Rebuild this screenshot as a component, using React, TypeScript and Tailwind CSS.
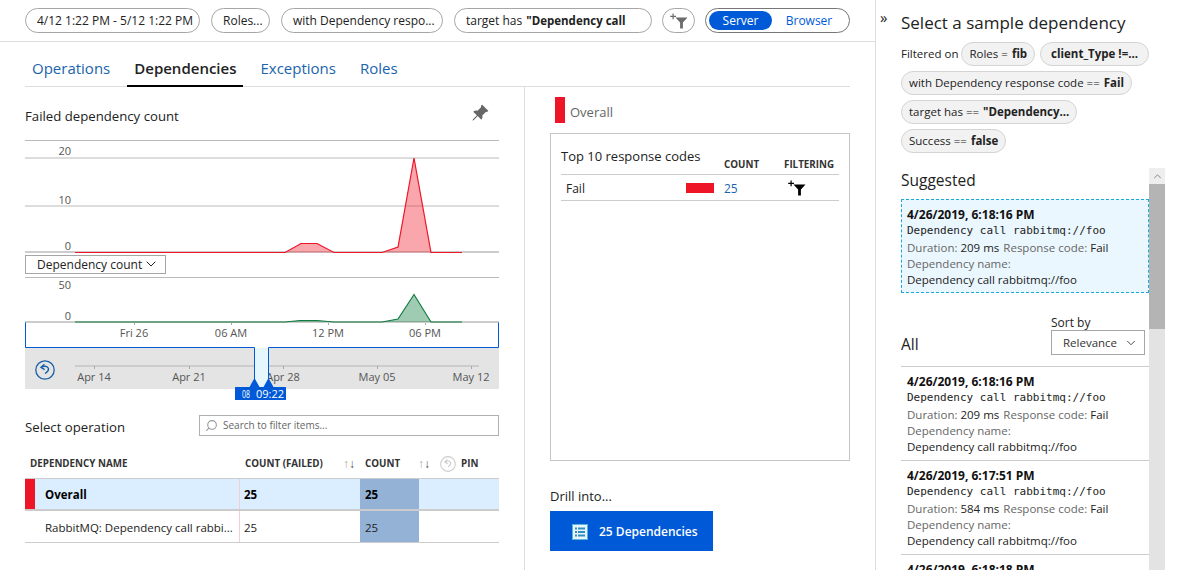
import { ChevronDown, Search } from "lucide-react";
import { BsPinAngleFill } from "react-icons/bs";

// ── small drawings ────────────────────────────────────────────────

function FunnelPlus({ color, className }: { color: string; className: string }) {
  return (
    <svg viewBox="0 0 18 16" className={className} fill={color}>
      <path d="M2.5 0.5h1.2v2.3H6V4H3.7v2.3H2.5V4H0.2V2.8h2.3z" />
      <path d="M5.5 4.6h12l-4.6 4.8v6.2h-2.8V9.4z" />
    </svg>
  );
}

function UndoCircle({ color, className }: { color: string; className: string }) {
  return (
    <svg viewBox="0 0 20 20" className={className} fill="none" stroke={color}>
      <circle cx="10" cy="10" r="9.2" strokeWidth="1.3" />
      <path d="M6.2 7.4c2-1.7 6.6-1.6 7.3 1.2.5 2.2-1.6 3.5-3.4 5" strokeWidth="1.4" />
      <path d="M9.4 4.3 6 7.3l3.6 2.4" strokeWidth="1.4" />
    </svg>
  );
}

function ListIcon() {
  return (
    <svg viewBox="0 0 16 16" className="w-4 h-4">
      <rect x="0.5" y="0.5" width="15" height="15" fill="#e8f4fb" stroke="#59b4d9" />
      <g fill="#2f8fc4">
        <rect x="3" y="3.5" width="2" height="2" />
        <rect x="6" y="3.5" width="7" height="2" />
        <rect x="3" y="7" width="2" height="2" />
        <rect x="6" y="7" width="7" height="2" />
        <rect x="3" y="10.5" width="2" height="2" />
        <rect x="6" y="10.5" width="7" height="2" />
      </g>
    </svg>
  );
}

// ── chart, drawn in page coordinates ──────────────────────────────

function ChartLabel({ x, y, children }: { x: number; y: number; children: string }) {
  return (
    <text x={x} y={y} textAnchor="middle" fontSize="11" fill="#555">
      {children}
    </text>
  );
}

function Charts() {
  return (
    <svg viewBox="25 135 474 267" className="w-[474px] h-[267px] block">
      <rect x="25" y="140" width="474" height="1" fill="#bbbbbb" />
      <rect x="25" y="157" width="474" height="2" fill="#dddddd" />
      <rect x="25" y="205" width="474" height="2" fill="#dddddd" />
      <rect x="25" y="251" width="474" height="2" fill="#cccccc" />
      <text x="71" y="155" textAnchor="end" fontSize="11" fill="#555">20</text>
      <text x="71" y="204" textAnchor="end" fontSize="11" fill="#555">10</text>
      <text x="71" y="250" textAnchor="end" fontSize="11" fill="#555">0</text>
      <path d="M285 252.5 301 243.5H317L334 252.5H382L398 247 414 158 431 252.5Z" fill="#ee1527" fillOpacity="0.38" />
      <path d="M75 252.5H285L301 243.5H317L334 252.5H382L398 247 414 158 431 252.5H462" fill="none" stroke="#ee1527" strokeWidth="1.2" />

      <rect x="25" y="277" width="474" height="1" fill="#bbbbbb" />
      <text x="71" y="289" textAnchor="end" fontSize="11" fill="#555">50</text>
      <text x="71" y="320" textAnchor="end" fontSize="11" fill="#555">0</text>
      <rect x="25" y="321" width="474" height="2" fill="#cccccc" />
      <path d="M285 322 300 320.5H317L334 322H382L398 319 414 294.5 431 322Z" fill="#107c41" fillOpacity="0.4" />
      <path d="M75 322H285L300 320.5H317L334 322H382L398 319 414 294.5 431 322H462" fill="none" stroke="#107c41" strokeWidth="1.2" />

      <path d="M134.5 323v2M231.5 323v2M328.5 323v2M425.5 323v2" stroke="#aaaaaa" />
      <ChartLabel x={134} y={337}>Fri 26</ChartLabel>
      <ChartLabel x={231} y={337}>06 AM</ChartLabel>
      <ChartLabel x={328} y={337}>12 PM</ChartLabel>
      <ChartLabel x={425} y={337}>06 PM</ChartLabel>

      <rect x="25" y="348" width="474" height="41" fill="#e4e4e4" />
      <rect x="75" y="365" width="404" height="2" fill="#cccccc" />
      <path d="M94.5 366v3M189.5 366v3M283.5 366v3M377.5 366v3M471.5 366v3" stroke="#aaaaaa" />
      <ChartLabel x={94} y={381}>Apr 14</ChartLabel>
      <ChartLabel x={189} y={381}>Apr 21</ChartLabel>
      <ChartLabel x={283} y={381}>Apr 28</ChartLabel>
      <ChartLabel x={377} y={381}>May 05</ChartLabel>
      <ChartLabel x={471} y={381}>May 12</ChartLabel>
      <svg x="35" y="360" width="20" height="20" viewBox="0 0 20 20" fill="none" stroke="#1a5fa8">
        <circle cx="10" cy="10" r="9.2" strokeWidth="1.3" />
        <path d="M6.2 7.4c2-1.7 6.6-1.6 7.3 1.2.5 2.2-1.6 3.5-3.4 5" strokeWidth="1.4" />
        <path d="M9.4 4.3 6 7.3l3.6 2.4" strokeWidth="1.4" />
      </svg>

      {/* brush selection */}
      <rect x="255" y="348" width="13" height="39" fill="#e5f6fd" />
      <path d="M25.5 322.5V347.5H254.5V387M268.5 387V347.5H498.5V322.5" fill="none" stroke="#005ad8" />
      <path d="M254.5 378 259.5 387H249.5ZM268.5 378 273.5 387H263.5Z" fill="#005ad8" />
      <rect x="235" y="387" width="51" height="13" fill="#005ad8" />
      <text x="242" y="398" fontSize="11" fill="#fff" textLength="8" lengthAdjust="spacingAndGlyphs">08</text>
      <text x="256" y="398" fontSize="11" fill="#fff">09:22</text>
    </svg>
  );
}

// ── main area pieces ──────────────────────────────────────────────

function Pill({ width, children }: { width: string; children: React.ReactNode }) {
  return (
    <div className={`${width} h-[25px] shrink-0 flex items-center px-[11px] rounded-full border border-[#a6a6a6] text-[12px] text-[#222] whitespace-nowrap overflow-hidden`}>
      {children}
    </div>
  );
}

function FilterBar() {
  return (
    <div className="h-[42px] pl-[25px] flex items-center gap-[11px] border-b border-[#dddddd]">
      <Pill width="w-[175px]">4/12 1:22 PM - 5/12 1:22 PM</Pill>
      <Pill width="w-[59px]">Roles...</Pill>
      <Pill width="w-[162px]">with Dependency respo...</Pill>
      <Pill width="w-[198px]">
        <span>target has</span>
        <b className="ml-[4px] text-[11.5px]">"Dependency call</b>
      </Pill>
      <div className="w-[33px] h-[25px] -ml-[1px] shrink-0 rounded-full border border-[#a6a6a6] flex items-center justify-center">
        <FunnelPlus color="#6b6b6b" className="w-[18px] h-4" />
      </div>
      <div className="w-[145px] h-[25px] ml-[-1px] shrink-0 rounded-full border border-[#777777] flex items-center p-[3px] text-[12px]">
        <div className="w-[63px] h-[19px] rounded-full bg-[#005ad8] text-white flex items-center justify-center">Server</div>
        <div className="flex-1 text-center text-[#005ad8]">Browser</div>
      </div>
    </div>
  );
}

function Tabs() {
  const tabs = ["Operations", "Dependencies", "Exceptions", "Roles"];
  return (
    <div className="h-[45px] ml-[25px] w-[825px] border-b border-[#dddddd] flex gap-[10px] text-[15px]">
      {tabs.map((t) => {
        const active = t === "Dependencies";
        return (
          <div
            key={t}
            className={
              active
                ? "h-[45px] px-[7px] pt-[14px] leading-[24px] border-b-2 border-black font-semibold text-[#222]"
                : "h-[45px] px-[7px] pt-[14px] leading-[24px] text-[#1a64ad]"
            }
          >
            {t}
          </div>
        );
      })}
    </div>
  );
}

function HeaderCell({ className, children }: { className: string; children: React.ReactNode }) {
  return <div className={`text-[9.8px] font-bold text-[#333] whitespace-nowrap ${className}`}>{children}</div>;
}

function SortArrows({ className }: { className: string }) {
  return (
    <div className={`text-[12px] leading-none ${className}`}>
      <span className="text-[#aaaaaa]">↑</span>
      <span className="text-[#555]">↓</span>
    </div>
  );
}

function DependencyRow({ name, selected }: { name: string; selected?: boolean }) {
  return (
    <div className={selected ? "h-[30px] flex bg-[#dbeeff] font-bold text-black" : "h-[31px] flex text-[#222]"}>
      <div className={selected ? "w-[10px] bg-[#ee1527]" : "w-[10px]"} />
      <div className="w-[205px] pl-[10px] pt-[2px] flex items-center border-r border-[#f6cdd1] whitespace-nowrap overflow-hidden">
        {name}
      </div>
      <div className="w-[120px] pl-[4px] pt-[2px] flex items-center">25</div>
      <div className="w-[59px] pl-[5px] pt-[2px] flex items-center bg-[#94b2d6]">25</div>
    </div>
  );
}

function LeftColumn() {
  return (
    <div className="w-[525px] pl-[25px] pr-[25px] border-r border-[#dddddd]">
      <div className="h-[48px] flex items-center justify-between pt-[12px]">
        <div className="text-[13.2px] text-[#222]">Failed dependency count</div>
        <BsPinAngleFill className="w-[18px] h-[18px] mr-[10px] -mt-[8px] text-[#666666]" />
      </div>
      <div className="relative">
        <Charts />
        <div className="absolute left-0 top-[120px] w-[141px] h-[19px] bg-white border border-[#a6a6a6] flex items-start justify-between pl-[11px] pr-[6px] text-[12px] text-[#222] overflow-hidden">
          <span className="leading-[14px] pt-[2px]">Dependency count</span>
          <ChevronDown className="w-4 h-4" strokeWidth={1.5} />
        </div>
      </div>
      <div className="mt-[13px] h-[21px] flex items-center justify-between">
        <div className="text-[13.2px] text-[#222] pt-[4px]">Select operation</div>
        <div className="w-[300px] h-[21px] border border-[#b0b0b0] flex items-center pl-[5px] gap-[5px] text-[10px] text-[#666]">
          <Search className="w-[13px] h-[13px] -scale-x-100 text-[#999999]" />
          Search to filter items...
        </div>
      </div>
      <div className="h-[42px] flex items-center relative pt-[14px]">
        <HeaderCell className="ml-[5px] w-[215px]">DEPENDENCY NAME</HeaderCell>
        <HeaderCell className="w-[98px]">COUNT (FAILED)</HeaderCell>
        <SortArrows className="w-[22px]" />
        <HeaderCell className="w-[53px]">COUNT</HeaderCell>
        <SortArrows className="w-[22px]" />
        <UndoCircle color="#cccccc" className="w-[16px] h-[16px] mr-[5px]" />
        <HeaderCell className="">PIN</HeaderCell>
      </div>
      <div className="text-[11.5px] border-t border-[#cccccc]">
        <DependencyRow name="Overall" selected />
        <div className="h-[2px] bg-[#cccccc]" />
        <DependencyRow name="RabbitMQ: Dependency call rabbi..." />
        <div className="h-px bg-[#cccccc]" />
      </div>
    </div>
  );
}

function RightColumn() {
  return (
    <div className="w-[326px] pl-[25px]">
      <div className="h-[46px] pt-[10px] flex items-stretch">
        <div className="w-[10px] h-[26px] ml-[5px] bg-[#ee1527]" />
        <div className="ml-[5px] text-[13px] text-[#666] leading-[30px]">Overall</div>
      </div>
      <div className="w-[300px] h-[328px] border border-[#c4c4c4] px-[10px] pt-[11px]">
        <div className="relative h-[30px] border-b border-[#cccccc]">
          <div className="text-[13px] text-[#222] leading-[22px]">Top 10 response codes</div>
          <HeaderCell className="absolute left-[163px] top-[13px] text-[9.5px]">COUNT</HeaderCell>
          <HeaderCell className="absolute left-[223px] top-[13px] text-[9.5px]">FILTERING</HeaderCell>
        </div>
        <div className="h-[26px] flex items-center border-b border-[#cccccc] text-[12px]">
          <div className="w-[125px] pl-[5px] pt-[3px] text-[#222]">Fail</div>
          <div className="w-[28px] h-[10px] bg-[#ee1527]" />
          <div className="w-[74px] pl-[10px] pt-[3px] text-[#1a64ad]">25</div>
          <FunnelPlus color="#000000" className="w-[18px] h-[16px]" />
        </div>
      </div>
      <div className="mt-[26px] text-[13px] leading-[18px] text-[#222]">Drill into...</div>
      <div className="mt-[6px] w-[163px] h-[40px] bg-[#005ad8] text-white flex items-center pl-[22px] pt-px gap-[11px] text-[12px] font-semibold">
        <ListIcon />
        25 Dependencies
      </div>
    </div>
  );
}

// ── sample panel ──────────────────────────────────────────────────

function Chip({ children }: { children: React.ReactNode }) {
  return (
    <div className="h-[24px] px-[7px] flex items-center rounded-full border border-[#d4d4d4] bg-[#f2f2f2] text-[11.5px] text-[#222] whitespace-nowrap">
      {children}
    </div>
  );
}

function SampleBody({ date, duration }: { date: string; duration: string }) {
  return (
    <>
      <div className="text-[12px] font-bold leading-[16px] text-[#111]">{date}</div>
      <div className="font-['DejaVu_Sans_Mono',monospace] text-[11px] leading-[16px] text-[#222]">Dependency call rabbitmq://foo</div>
      <div className="mt-[1px] text-[11.5px] leading-[16px] text-[#666] whitespace-nowrap">
        Duration: <span className="text-[#222]">{duration} ms</span>
        <span className="ml-[4px]">Response code:</span> <span className="text-[#222]">Fail</span>
      </div>
      <div className="text-[11.5px] leading-[16px] text-[#666]">Dependency name:</div>
      <div className="text-[11.5px] leading-[16px] text-[#222]">Dependency call rabbitmq://foo</div>
    </>
  );
}

function SampleRow({ date, duration }: { date: string; duration: string }) {
  return (
    <div className="h-[94px] pl-[6px] pt-[7px] border-t border-[#cccccc]">
      <SampleBody date={date} duration={duration} />
    </div>
  );
}

function SamplePanel() {
  return (
    <div className="relative w-[315px] h-[570px] border-l border-[#dddddd] overflow-hidden">
      <div className="absolute left-[4px] top-[9px] text-[15px] leading-[16px] text-[#222]">»</div>
      <div className="pl-[25px] pt-[10px] h-[168px] pr-[16px]">
        <div className="text-[17px] leading-[26px] text-[#222] whitespace-nowrap">Select a sample dependency</div>
        <div className="mt-[6px] flex flex-wrap items-center gap-x-[5px] gap-y-[5px] text-[11.5px] text-[#222]">
          <span className="-mr-[2px]">Filtered on</span>
          <Chip>
            Roles = <b className="ml-1">fib</b>
          </Chip>
          <Chip>
            <b className="px-[3px]">client_Type !=...</b>
          </Chip>
          <Chip>
            with Dependency response code == <b className="ml-1">Fail</b>
          </Chip>
          <Chip>
            target has == <b className="ml-1">"Dependency...</b>
          </Chip>
          <Chip>
            Success == <b className="ml-1">false</b>
          </Chip>
        </div>
      </div>
      <div className="flex h-[402px]">
        <div className="w-[248px] ml-[25px] overflow-hidden">
          <div className="h-[31px] text-[15.5px] leading-[24px] text-[#222]">Suggested</div>
          <div className="h-[94px] pl-[5px] pt-[7px] bg-[#ebf7fe] border border-dashed border-[#1aa9d8]">
            <SampleBody date="4/26/2019, 6:18:16 PM" duration="209" />
          </div>
          <div className="h-[73px] relative">
            <div className="absolute left-0 top-[39px] text-[15.5px] leading-[24px] text-[#222]">All</div>
            <div className="absolute left-[150px] top-[22px] text-[12px] leading-[16px] text-[#222]">Sort by</div>
            <div className="absolute left-[150px] top-[37px] w-[94px] h-[25px] border border-[#a6a6a6] flex items-center justify-between pl-[11px] pr-[6px] text-[11.5px] text-[#333]">
              Relevance
              <ChevronDown className="w-[14px] h-[14px]" strokeWidth={1.5} />
            </div>
          </div>
          <SampleRow date="4/26/2019, 6:18:16 PM" duration="209" />
          <SampleRow date="4/26/2019, 6:17:51 PM" duration="584" />
          <SampleRow date="4/26/2019, 6:18:18 PM" duration="209" />
        </div>
        <div className="w-[16px] bg-[#e3e3e3] flex flex-col">
          <div className="h-[16px] bg-[#eeeeee] flex items-center justify-center">
            <svg viewBox="0 0 10 6" className="w-[9px] h-[5px]" fill="none" stroke="#777777">
              <path d="M1 5 5 1l4 4" />
            </svg>
          </div>
          <div className="h-[145px] bg-[#b4b4b4]" />
        </div>
      </div>
    </div>
  );
}

export default function App() {
  return (
    <div className="w-[1190px] h-[570px] overflow-hidden flex bg-white font-['Open_Sans','Noto_Sans',sans-serif]">
      <div className="w-[875px] shrink-0">
        <FilterBar />
        <Tabs />
        <div className="flex h-[483px]">
          <LeftColumn />
          <RightColumn />
        </div>
      </div>
      <SamplePanel />
    </div>
  );
}
